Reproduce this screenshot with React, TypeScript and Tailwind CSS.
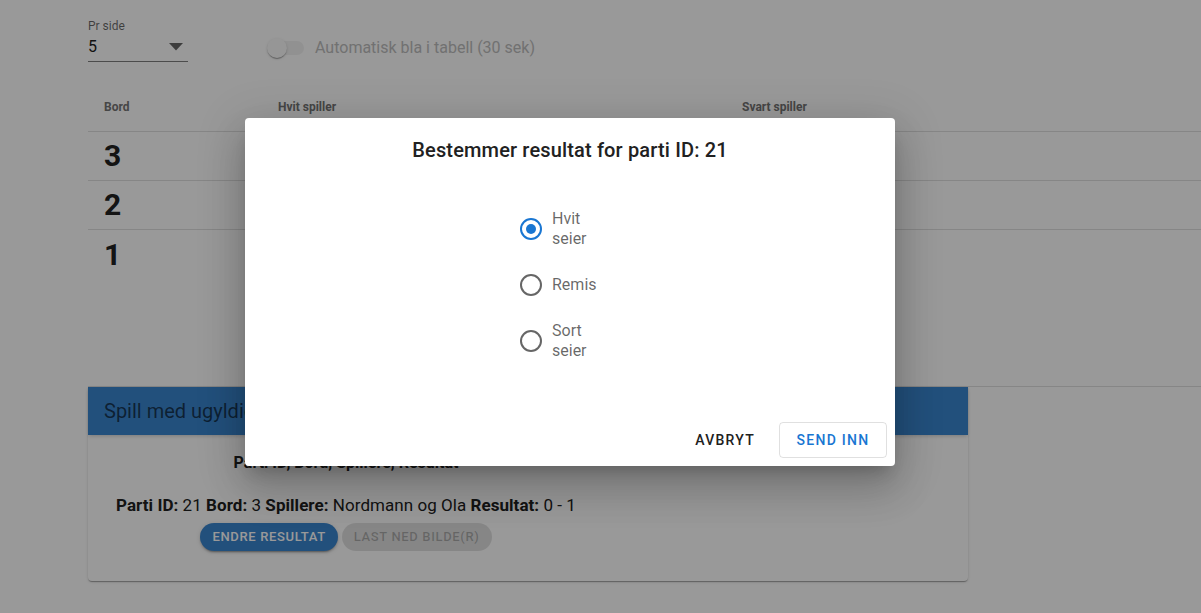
import { useState } from "react";

const ROWS = [3, 2, 1];

const OPTIONS = [
  { id: "hvit", label: "Hvit seier" },
  { id: "remis", label: "Remis" },
  { id: "sort", label: "Sort seier" },
];

function Radio({ checked }: { checked: boolean }) {
  return (
    <svg width="24" height="24" viewBox="0 0 24 24" className={checked ? "text-[#1976d2]" : "text-black/60"}>
      <circle cx="12" cy="12" r="10" fill="none" stroke="currentColor" strokeWidth="2" />
      {checked && <circle cx="12" cy="12" r="5" fill="currentColor" />}
    </svg>
  );
}

export default function App() {
  const [result, setResult] = useState("hvit");

  return (
    <div className="relative w-[1201px] h-[613px] overflow-hidden bg-white font-['Roboto','Liberation_Sans',sans-serif] text-[#212121]">
      {/* Top controls */}
      <div className="flex items-end pb-[2px] pl-[88px] pt-[18px]">
        <div className="w-[100px]">
          <div className="text-xs leading-[16px] text-black/60">Pr side</div>
          <div className="flex h-[28px] items-center justify-between border-b border-black/50 pb-[2px] pr-[4px]">
            <span className="text-base">5</span>
            <svg width="14" height="8" viewBox="0 0 14 8" className="mr-[1px]">
              <path d="M0 0h14L7 7.5z" fill="rgba(0,0,0,0.6)" />
            </svg>
          </div>
        </div>
        <div className="ml-[70px] flex h-[28px] items-center">
          <div className="relative h-[38px] w-[57px]">
            <div className="absolute left-[12px] top-[12px] h-[14px] w-[34px] rounded-full bg-black/5" />
            <div className="absolute left-[9px] top-[9px] h-[20px] w-[20px] rounded-full bg-[#fafafa] shadow-[0_2px_1px_-1px_rgba(0,0,0,0.2),0_1px_1px_0_rgba(0,0,0,0.14),0_1px_3px_0_rgba(0,0,0,0.12)]" />
          </div>
          <span className="text-base text-[#bdbdbd]">Automatisk bla i tabell (30 sek)</span>
        </div>
      </div>

      {/* Table */}
      <div className="ml-[88px] mt-[18px] border-b border-[#e0e0e0] pb-[107px]">
        <div className="flex h-[50px] items-center border-b border-[#e0e0e0] text-xs font-bold text-[#757575]">
          <div className="w-[174px] pl-4">Bord</div>
          <div className="w-[464px] pl-4">Hvit spiller</div>
          <div className="pl-4">Svart spiller</div>
        </div>
        {ROWS.map((n, i) => (
          <div key={n} className={`flex h-[49px] items-center ${i < ROWS.length - 1 ? "border-b border-[#e0e0e0]" : ""}`}>
            <div className="w-[174px] pl-4 text-[30px] font-bold leading-none text-[#222]">{n}</div>
          </div>
        ))}
      </div>

      {/* Card */}
      <div className="ml-[88px] w-[880px] rounded-b bg-white shadow-[0_2px_1px_-1px_rgba(0,0,0,0.2),0_1px_1px_0_rgba(0,0,0,0.14),0_1px_3px_0_rgba(0,0,0,0.12)]">
        <div className="flex h-[48px] items-center bg-[#3a86cf] pl-4 text-xl text-black/60 shadow-[0_2px_4px_-1px_rgba(0,0,0,0.2)]">
          Spill med ugyldige resultater
        </div>
        <div className="px-7 pb-[30px] pt-[16px]">
          <div className="inline-flex flex-col items-center">
            <div className="text-base font-bold leading-[20px]">Parti ID, Bord, Spillere, Resultat</div>
            <div className="mt-[22px] text-[17px] leading-[20px] tracking-[0.05px]">
              <b>Parti ID:</b> 21 <b>Bord:</b> 3 <b>Spillere:</b> Nordmann og Ola <b>Resultat:</b> 0 - 1
            </div>
            <div className="mt-[8px] flex gap-1">
              <button className="h-[28px] rounded-full bg-[#3a86cf] px-3 text-[13px] font-medium tracking-[0.65px] text-white shadow-[0_3px_1px_-2px_rgba(0,0,0,0.2),0_2px_2px_0_rgba(0,0,0,0.14),0_1px_5px_0_rgba(0,0,0,0.12)]">
                ENDRE RESULTAT
              </button>
              <button className="h-[28px] rounded-full bg-black/12 px-3 text-[13px] font-medium tracking-[0.65px] text-black/25">
                LAST NED BILDE(R)
              </button>
            </div>
          </div>
        </div>
      </div>

      {/* Backdrop */}
      <div className="absolute inset-0 bg-black/40" />

      {/* Dialog */}
      <div className="absolute left-[245px] top-[118px] flex h-[348px] w-[650px] flex-col rounded bg-white shadow-[0_11px_15px_-7px_rgba(0,0,0,0.2),0_24px_38px_3px_rgba(0,0,0,0.14),0_9px_46px_8px_rgba(0,0,0,0.12)]">
        <h2 className="pt-4 text-center text-xl font-medium leading-[32px] tracking-[0.15px] text-[#212121]">
          Bestemmer resultat for parti ID: 21
        </h2>
        <div className="mt-[42px] flex flex-col gap-[14px] pl-[265px]">
          {OPTIONS.map((o) => (
            <label key={o.id} className="flex h-[42px] cursor-pointer items-center" onClick={() => setResult(o.id)}>
              <span className="flex h-[42px] w-[42px] items-center justify-center">
                <Radio checked={result === o.id} />
              </span>
              <span className="w-[50px] text-base leading-[20px] text-black/60">{o.label}</span>
            </label>
          ))}
        </div>
        <div className="mt-auto flex justify-end gap-2 p-2">
          <button className="h-[36px] rounded px-4 text-sm font-medium tracking-[1.25px] text-[#212121]">AVBRYT</button>
          <button className="h-[36px] w-[108px] rounded border border-black/12 text-sm font-medium tracking-[1.25px] text-[#1976d2]">
            SEND INN
          </button>
        </div>
      </div>
    </div>
  );
}
